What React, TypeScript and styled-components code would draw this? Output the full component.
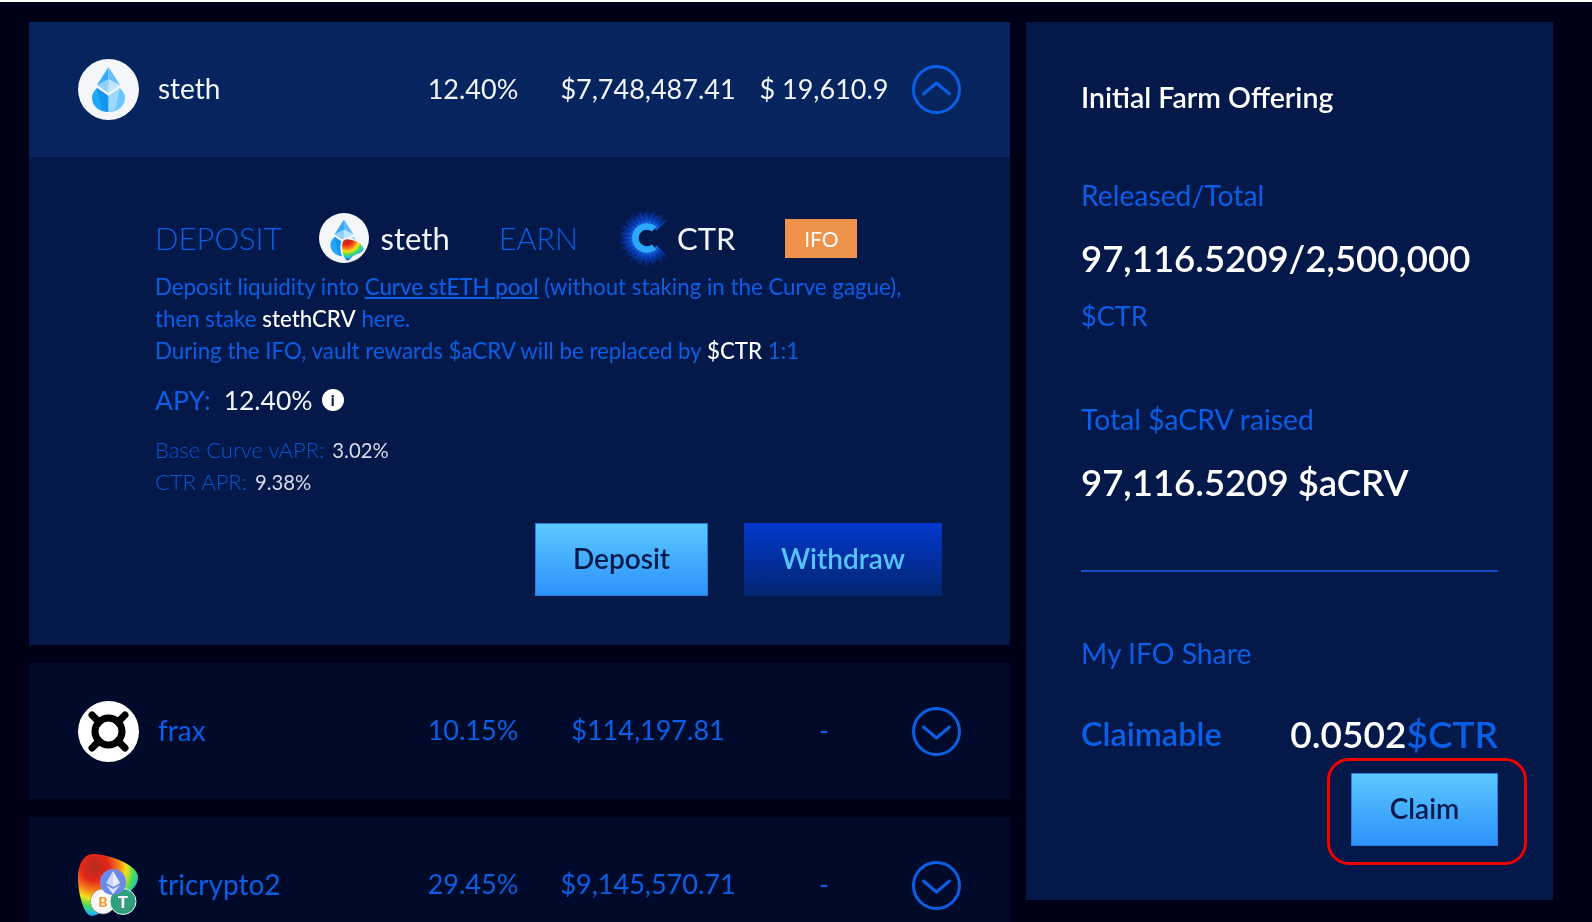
import React from "react";
import styled, { createGlobalStyle } from "styled-components";

const Global = createGlobalStyle`
  html, body { margin: 0; padding: 0; background: #00001a; }
  body { font-family: "Lato", "Open Sans", sans-serif; }
`;

const BLUE = "#0a5fe6";

const Page = styled.div`
  width: 1592px;
  height: 922px;
  box-sizing: border-box;
  overflow: hidden;
  border-top: 2px solid #ffffff;
  padding: 20px 39px 0 29px;
  display: flex;
  align-items: flex-start;
  gap: 16px;
  background: #000016;
  filter: blur(0.35px);
`;

const ListColumn = styled.div`
  width: 981px;
  flex: none;
  display: flex;
  flex-direction: column;
  gap: 18px;
`;

const Pool = styled.section`
  display: flex;
  flex-direction: column;
`;

const PoolRow = styled.div<{ $open?: boolean }>`
  height: ${(p) => (p.$open ? 135 : 136)}px;
  box-sizing: border-box;
  padding: 0 49px;
  display: grid;
  grid-template-columns: 320px 150px 200px 152px 61px;
  align-items: center;
  background: ${(p) => (p.$open ? "#06245e" : "#000a2b")};
  color: ${(p) => (p.$open ? "#f2f5fb" : BLUE)};
  font-size: 27px;
  font-weight: 400;
`;

const NameCell = styled.div`
  display: flex;
  align-items: center;
  gap: 19px;
`;

const NameText = styled.span`
  font-size: 28px;
  padding-bottom: 3px;
`;

const NumberCell = styled.div`
  text-align: center;
  white-space: nowrap;
  padding-bottom: 3px;
`;

const ToggleCell = styled.div`
  display: flex;
  justify-content: flex-end;
`;

const Detail = styled.div`
  background: #05184a;
  padding: 51px 68px 49px 126px;
  display: flex;
  flex-direction: column;
`;

const HeadLine = styled.div`
  height: 60px;
  display: flex;
  align-items: center;
  font-size: 31px;
  font-weight: 300;
  white-space: nowrap;
`;

const HeadLabel = styled.span<{ $mr: number; $size: number }>`
  color: ${BLUE};
  margin-right: ${(p) => p.$mr}px;
  font-size: ${(p) => p.$size}px;
`;

const HeadToken = styled.span<{ $ml: number; $mr: number }>`
  color: #f2f5fb;
  font-weight: 400;
  margin-left: ${(p) => p.$ml}px;
  margin-right: ${(p) => p.$mr}px;
`;

const Badge = styled.span`
  width: 72px;
  height: 39px;
  display: flex;
  align-items: center;
  justify-content: center;
  background: #f0934a;
  color: #ffffff;
  font-size: 21px;
  font-weight: 400;
`;

const Description = styled.div`
  margin-top: 3px;
  color: ${BLUE};
  font-size: 22.3px;
  line-height: 32px;
  font-weight: 400;
  white-space: nowrap;
`;

const PoolLink = styled.a`
  color: ${BLUE};
  font-weight: 500;
  text-decoration: underline;
`;

const Strong = styled.span`
  color: #ffffff;
  font-weight: 500;
`;

const ApyLine = styled.div`
  margin-top: 14px;
  height: 40px;
  padding-bottom: 2px;
  box-sizing: border-box;
  display: flex;
  align-items: center;
  font-size: 26.5px;
  font-weight: 400;
  color: ${BLUE};
`;

const ApyValue = styled.span`
  color: #f2f5fb;
  margin: 0 9px 0 13px;
`;

const InfoDot = styled.span`
  width: 22px;
  height: 22px;
  border-radius: 50%;
  background: #ffffff;
  color: #05184a;
  display: flex;
  align-items: center;
  justify-content: center;
  font-size: 15px;
  font-weight: 900;
  line-height: 1;
`;

const Breakdown = styled.div`
  margin-top: 13px;
  font-size: 22px;
  line-height: 32px;
  font-weight: 300;
  color: #0b55d0;
`;

const BreakdownValue = styled.span`
  color: #d5dbe8;
  font-size: 20.3px;
  font-weight: 400;
  margin-left: 2px;
`;

const Actions = styled.div`
  margin-top: 25px;
  display: flex;
  justify-content: flex-end;
  gap: 36px;
`;

const ActionButton = styled.button<{ $variant: "primary" | "dark"; $w: number }>`
  width: ${(p) => p.$w}px;
  height: 73px;
  border: ${(p) => (p.$variant === "primary" ? "1px solid #2a7fdc" : "0")};
  padding: 0 0 3px;
  font-family: inherit;
  font-size: 28px;
  font-weight: 600;
  background: ${(p) =>
    p.$variant === "primary"
      ? "linear-gradient(180deg, #5cc8ff 0%, #2b92fb 100%)"
      : "linear-gradient(180deg, #0238cf 0%, #02256f 100%)"};
  color: ${(p) => (p.$variant === "primary" ? "#031a4a" : "#56c4fb")};
`;

const SidePanel = styled.aside`
  width: 527px;
  height: 878px;
  flex: none;
  box-sizing: border-box;
  padding: 57px 55px 0 55px;
  background: #05184a;
  display: flex;
  flex-direction: column;
`;

const SideTitle = styled.div`
  height: 36px;
  line-height: 36px;
  font-size: 28.5px;
  font-weight: 600;
  color: #ffffff;
`;

const SideLabel = styled.div<{ $mt: number; $size?: number }>`
  margin-top: ${(p) => p.$mt}px;
  height: 36px;
  line-height: 36px;
  font-size: ${(p) => p.$size ?? 28.3}px;
  font-weight: 400;
  color: ${BLUE};
`;

const SideValue = styled.div`
  margin-top: 20px;
  height: 50px;
  line-height: 50px;
  font-size: 36.5px;
  font-weight: 600;
  color: #ffffff;
  white-space: nowrap;
`;

const Divider = styled.hr`
  margin: 63px 0 0;
  border: 0;
  height: 2px;
  background: #0a4fc4;
`;

const ClaimLine = styled.div`
  margin-top: 37px;
  height: 50px;
  display: flex;
  align-items: center;
  justify-content: space-between;
  white-space: nowrap;
`;

const ClaimLabel = styled.span`
  font-size: 32.5px;
  font-weight: 600;
  color: ${BLUE};
`;

const ClaimAmount = styled.span`
  font-size: 37px;
  font-weight: 600;
  color: #ffffff;
`;

const ClaimUnit = styled.span`
  color: ${BLUE};
`;

const ClaimWrap = styled.div`
  margin-top: 15px;
  align-self: flex-end;
  position: relative;
`;

const Highlight = styled.div`
  position: absolute;
  left: -24px;
  right: -29px;
  top: -15px;
  bottom: -19px;
  border: 3px solid #f00000;
  border-radius: 22px;
  pointer-events: none;
`;

const Icon = styled.svg`
  display: block;
  flex: none;
`;

const Chevron = ({ up }: { up?: boolean }) => (
  <Icon width="49" height="49" viewBox="0 0 49 49" fill="none" stroke={BLUE} strokeWidth="3">
    <circle cx="24.5" cy="24.5" r="23" />
    <polyline
      points={up ? "11.5,29 24.5,18 37.5,29" : "11.5,20 24.5,31 37.5,20"}
      strokeLinecap="round"
      strokeLinejoin="round"
    />
  </Icon>
);

const LidoDrop = () => (
  <>
    <polygon points="30.5,8 19,26 30.5,26" fill="#37a9fd" />
    <polygon points="30.5,8 42,26 30.5,26" fill="#62bdff" />
    <polygon points="19,26 30.5,20 30.5,34" fill="#8fd1ff" />
    <polygon points="42,26 30.5,20 30.5,34" fill="#bfe5ff" />
    <path d="M19 29 C15 33 14 36 14 39 C14 47 21 53 30.5 53 L30.5 37 Z" fill="#1ea7fd" />
    <path d="M42 29 C46 33 47 36 47 39 C47 47 40 53 30.5 53 L30.5 37 Z" fill="#6cc7ff" />
    <polygon points="19,29 30.5,37 30.5,53 24,51" fill="#0f8fe6" opacity="0.75" />
    <polygon points="42,29 30.5,37 30.5,53 37,51" fill="#a9dcff" opacity="0.8" />
  </>
);

const CurveGradient = ({ id, cx, cy, r }: { id: string; cx: number; cy: number; r: number }) => (
  <radialGradient id={id} gradientUnits="userSpaceOnUse" cx={cx} cy={cy} r={r}>
    <stop offset="0" stopColor="#b22a1c" />
    <stop offset="0.26" stopColor="#e5281a" />
    <stop offset="0.44" stopColor="#f6801a" />
    <stop offset="0.58" stopColor="#f5e21c" />
    <stop offset="0.72" stopColor="#4fdc4f" />
    <stop offset="0.86" stopColor="#18bfe8" />
    <stop offset="1" stopColor="#1433d8" />
  </radialGradient>
);

const StethIcon = () => (
  <Icon width="61" height="61" viewBox="0 0 61 61">
    <circle cx="30.5" cy="30.5" r="30.5" fill="#f4f6f9" />
    <LidoDrop />
  </Icon>
);

const StethCurveIcon = () => (
  <Icon width="50" height="50" viewBox="0 0 61 61">
    <defs>
      <CurveGradient id="mini-curve" cx={34} cy={32} r={26} />
    </defs>
    <circle cx="30.5" cy="30.5" r="30.5" fill="#f4f6f9" />
    <LidoDrop />
    <path
      d="M34 31 C42 31 54 36 55 43 C56 48 50 50 45 52 C40 54 38 59 35 59 C31 59 27 50 27 42 C27 36 29 31 34 31 Z"
      fill="url(#mini-curve)"
      stroke="#f4f6f9"
      strokeWidth="2"
    />
  </Icon>
);

const FraxIcon = () => (
  <Icon width="61" height="61" viewBox="0 0 61 61">
    <circle cx="30.5" cy="30.5" r="30.5" fill="#ffffff" />
    <circle cx="30.5" cy="30.5" r="13.5" fill="none" stroke="#000000" strokeWidth="7" />
    <g stroke="#000000" strokeWidth="7" strokeLinecap="round">
      <line x1="21" y1="21" x2="14" y2="14" />
      <line x1="40" y1="21" x2="47" y2="14" />
      <line x1="21" y1="40" x2="14" y2="47" />
      <line x1="40" y1="40" x2="47" y2="47" />
    </g>
  </Icon>
);

const TricryptoIcon = () => (
  <Icon width="61" height="62" viewBox="0 0 61 62">
    <defs>
      <CurveGradient id="big-curve" cx={17} cy={13} r={54} />
    </defs>
    <path
      d="M15 0 C30 0 58 10 60 22 C61 32 50 40 40 46 C28 52 22 62 14 62 C6 62 0 40 0 24 C0 10 6 0 15 0 Z"
      fill="url(#big-curve)"
    />
    <circle cx="25" cy="47.5" r="12.5" fill="#f4f4f4" stroke="#777" strokeWidth="1" strokeDasharray="1.5 1" />
    <circle cx="25" cy="47.5" r="8" fill="#ffffff" />
    <text x="25" y="52.5" textAnchor="middle" fontFamily="Lato, sans-serif" fontSize="14" fontWeight="900" fill="#f29a2e">
      B
    </text>
    <circle cx="45" cy="47.5" r="13" fill="#2f9e7d" stroke="#e9f4f0" strokeWidth="1" />
    <text x="45" y="53.5" textAnchor="middle" fontFamily="Lato, sans-serif" fontSize="17" fontWeight="900" fill="#ffffff">
      T
    </text>
    <circle cx="35" cy="28" r="13" fill="#6b88e8" />
    <polygon points="35,17 42,29 35,33 28,29" fill="#c9d6fb" />
    <polygon points="35,17 42,29 35,33" fill="#ffffff" opacity="0.55" />
    <polygon points="28,31 35,35 42,31 35,40" fill="#dfe7ff" />
  </Icon>
);

const burst = Array.from({ length: 200 }, (_, i) => {
  const a = (i / 200) * Math.PI * 2;
  const len = 23 + ((i * 37) % 9);
  return { a, len, op: 0.45 + ((i * 13) % 7) / 12 };
}).filter((s) => Math.abs(Math.atan2(Math.sin(s.a), Math.cos(s.a))) > 0.72);

const CtrIcon = () => (
  <Icon width="60" height="60" viewBox="0 0 60 60">
    <defs>
      <radialGradient id="ctr-glow" gradientUnits="userSpaceOnUse" cx="30" cy="30" r="30">
        <stop offset="0.4" stopColor="#1f8dfa" />
        <stop offset="0.62" stopColor="#0a48d8" />
        <stop offset="1" stopColor="#05184a" />
      </radialGradient>
    </defs>
    <g stroke="url(#ctr-glow)" strokeWidth="1">
      {burst.map((s, i) => (
        <line
          key={i}
          x1={30 + 12 * Math.cos(s.a)}
          y1={30 + 12 * Math.sin(s.a)}
          x2={30 + s.len * Math.cos(s.a)}
          y2={30 + s.len * Math.sin(s.a)}
          opacity={s.op}
        />
      ))}
    </g>
    <path d="M37 21 A11.5 11.5 0 1 0 37 39" fill="none" stroke="#2aa8ff" strokeWidth="6.5" />
  </Icon>
);

export default function App() {
  return (
    <Page>
      <Global />
      <ListColumn>
        <Pool>
          <PoolRow $open>
            <NameCell>
              <StethIcon />
              <NameText>steth</NameText>
            </NameCell>
            <NumberCell>12.40%</NumberCell>
            <NumberCell>$7,748,487.41</NumberCell>
            <NumberCell>$ 19,610.9</NumberCell>
            <ToggleCell>
              <Chevron up />
            </ToggleCell>
          </PoolRow>
          <Detail>
            <HeadLine>
              <HeadLabel $mr={37} $size={31}>DEPOSIT</HeadLabel>
              <StethCurveIcon />
              <HeadToken $ml={12} $mr={49}>steth</HeadToken>
              <HeadLabel $mr={39} $size={30.5}>EARN</HeadLabel>
              <CtrIcon />
              <HeadToken $ml={0} $mr={50}>CTR</HeadToken>
              <Badge>IFO</Badge>
            </HeadLine>
            <Description>
              Deposit liquidity into <PoolLink href="#">Curve stETH pool</PoolLink> (without staking in the Curve gague),
              <br />
              then stake <Strong>stethCRV</Strong> here.
              <br />
              During the IFO, vault rewards $aCRV will be replaced by <Strong>$CTR</Strong> 1:1
            </Description>
            <ApyLine>
              APY:
              <ApyValue>12.40%</ApyValue>
              <InfoDot>i</InfoDot>
            </ApyLine>
            <Breakdown>
              Base Curve vAPR: <BreakdownValue>3.02%</BreakdownValue>
              <br />
              CTR APR: <BreakdownValue>9.38%</BreakdownValue>
            </Breakdown>
            <Actions>
              <ActionButton $variant="primary" $w={173}>Deposit</ActionButton>
              <ActionButton $variant="dark" $w={198}>Withdraw</ActionButton>
            </Actions>
          </Detail>
        </Pool>
        <PoolRow>
          <NameCell>
            <FraxIcon />
            <NameText>frax</NameText>
          </NameCell>
          <NumberCell>10.15%</NumberCell>
          <NumberCell>$114,197.81</NumberCell>
          <NumberCell>-</NumberCell>
          <ToggleCell>
            <Chevron />
          </ToggleCell>
        </PoolRow>
        <PoolRow>
          <NameCell>
            <TricryptoIcon />
            <NameText>tricrypto2</NameText>
          </NameCell>
          <NumberCell>29.45%</NumberCell>
          <NumberCell>$9,145,570.71</NumberCell>
          <NumberCell>-</NumberCell>
          <ToggleCell>
            <Chevron />
          </ToggleCell>
        </PoolRow>
      </ListColumn>
      <SidePanel>
        <SideTitle>Initial Farm Offering</SideTitle>
        <SideLabel $mt={62}>Released/Total</SideLabel>
        <SideValue>97,116.5209/2,500,000</SideValue>
        <SideLabel $mt={15} $size={27}>$CTR</SideLabel>
        <SideLabel $mt={67}>Total $aCRV raised</SideLabel>
        <SideValue>97,116.5209 $aCRV</SideValue>
        <Divider />
        <SideLabel $mt={63}>My IFO Share</SideLabel>
        <ClaimLine>
          <ClaimLabel>Claimable</ClaimLabel>
          <ClaimAmount>
            0.0502<ClaimUnit>$CTR</ClaimUnit>
          </ClaimAmount>
        </ClaimLine>
        <ClaimWrap>
          <ActionButton $variant="primary" $w={147}>Claim</ActionButton>
          <Highlight />
        </ClaimWrap>
      </SidePanel>
    </Page>
  );
}
